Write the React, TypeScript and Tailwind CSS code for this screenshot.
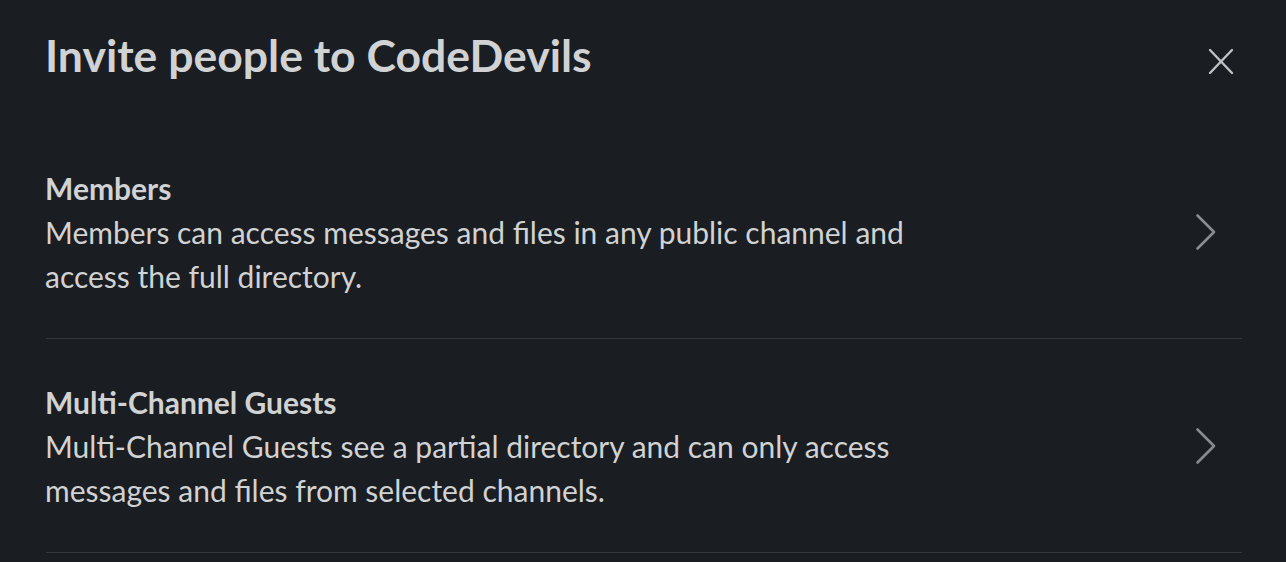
import React from "react";

function Chevron() {
  return (
    <svg width="22" height="38" viewBox="0 0 22 38" fill="none" className="shrink-0">
      <polyline points="2.5,2.5 19,19 2.5,35.5" stroke="#8a8b8d" strokeWidth="2.6" strokeLinecap="round" strokeLinejoin="round" />
    </svg>
  );
}

function Row({ title, desc }: { title: string; desc: string }) {
  return (
    <div className="flex h-[214px] items-center justify-between border-b border-[#35373b]">
      <div className="-ml-px w-[920px]">
        <div className="text-[30px] font-bold leading-[44px]">{title}</div>
        <div className="text-[30px] leading-[44px]">{desc}</div>
      </div>
      <div className="mr-[25px]">
        <Chevron />
      </div>
    </div>
  );
}

export default function App() {
  return (
    <div
      className="h-[562px] w-full overflow-hidden bg-[#1a1d21] pl-[46px] pr-[44px] text-[#d1d2d3]"
      style={{ fontFamily: "Lato, 'Noto Sans', sans-serif" }}
    >
      <div className="flex h-[125px] items-start justify-between pt-[33px]">
        <h1 className="-ml-px text-[44.5px] font-bold leading-[44px]">Invite people to CodeDevils</h1>
        <button className="mr-[8px] mt-[15px]" aria-label="Close">
          <svg width="26" height="27" viewBox="0 0 26 27" fill="none">
            <line x1="2" y1="2" x2="24" y2="25" stroke="#c1c2c4" strokeWidth="2.4" strokeLinecap="round" />
            <line x1="24" y1="2" x2="2" y2="25" stroke="#c1c2c4" strokeWidth="2.4" strokeLinecap="round" />
          </svg>
        </button>
      </div>
      <Row
        title="Members"
        desc="Members can access messages and files in any public channel and access the full directory."
      />
      <Row
        title="Multi-Channel Guests"
        desc="Multi-Channel Guests see a partial directory and can only access messages and files from selected channels."
      />
    </div>
  );
}
